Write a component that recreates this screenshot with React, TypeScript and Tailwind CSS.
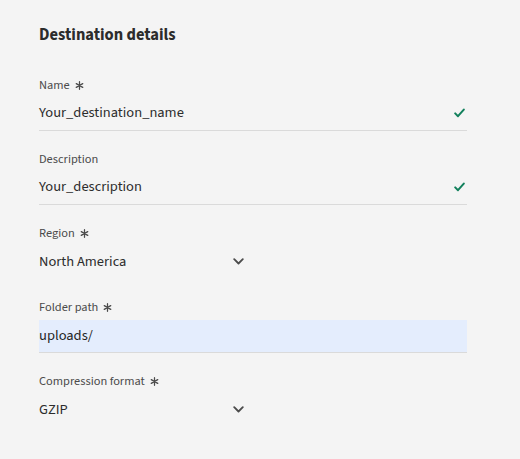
import React from 'react';

const font = { fontFamily: '"Source Sans 3", "Noto Sans", "Open Sans", sans-serif' };

function Asterisk() {
  return (
    <svg width="9" height="9" viewBox="0 0 10 10" className="ml-[5px] inline-block text-[#4b4b4b]">
      <path d="M5 0.8 V9.2 M1.4 2.9 L8.6 7.1 M8.6 2.9 L1.4 7.1" stroke="currentColor" strokeWidth="1.4" strokeLinecap="round" />
    </svg>
  );
}

function Check() {
  return (
    <svg width="11" height="10" viewBox="0 0 11 10" className="text-[#12805c]">
      <path d="M1.2 5.4 L4 8.2 L9.8 1.6" fill="none" stroke="currentColor" strokeWidth="2" strokeLinecap="round" strokeLinejoin="round" />
    </svg>
  );
}

function Chevron() {
  return (
    <svg width="11" height="7" viewBox="0 0 11 7" className="text-[#4b4b4b]">
      <path d="M1.2 1.2 L5.5 5.5 L9.8 1.2" fill="none" stroke="currentColor" strokeWidth="1.8" strokeLinecap="round" strokeLinejoin="round" />
    </svg>
  );
}

function Label({ text, required }: { text: string; required?: boolean }) {
  return (
    <div className="flex h-4 items-center text-[12.4px] leading-4 text-[#4b4b4b]">
      {text}
      {required && <Asterisk />}
    </div>
  );
}

function TextField({ label, value, required }: { label: string; value: string; required?: boolean }) {
  return (
    <div className="flex flex-col gap-[5px]">
      <Label text={label} required={required} />
      <div className="flex h-[33px] w-[428px] items-center justify-between border-b border-[#dadada] pb-[2px] pr-[2px] text-[14.5px] text-[#2c2c2c]">
        <span>{value}</span>
        <Check />
      </div>
    </div>
  );
}

function Picker({ label, value }: { label: string; value: string }) {
  return (
    <div className="flex flex-col gap-[5px]">
      <Label text={label} required />
      <div className="flex h-[33px] w-[206px] items-center justify-between pb-[2px] pr-[1px] text-[14.5px] text-[#2c2c2c]">
        <span>{value}</span>
        <Chevron />
      </div>
    </div>
  );
}

export default function App() {
  return (
    <div className="h-[459px] w-[520px] bg-[#f4f4f4] pl-[39px] pt-[25px]" style={font}>
      <h2 className="h-5 text-[16.5px] font-bold leading-5 text-[#2c2c2c]">Destination details</h2>
      <div className="mt-8 flex flex-col gap-5">
        <TextField label="Name" value="Your_destination_name" required />
        <TextField label="Description" value="Your_description" />
        <Picker label="Region" value="North America" />
        <div className="flex flex-col gap-[5px]">
          <Label text="Folder path" required />
          <div className="flex h-[33px] w-[428px] items-center border-b border-[#dadada] bg-[#e4edfd] text-[14.5px] text-[#1f1f1f]">
            uploads/
          </div>
        </div>
        <Picker label="Compression format" value="GZIP" />
      </div>
    </div>
  );
}
